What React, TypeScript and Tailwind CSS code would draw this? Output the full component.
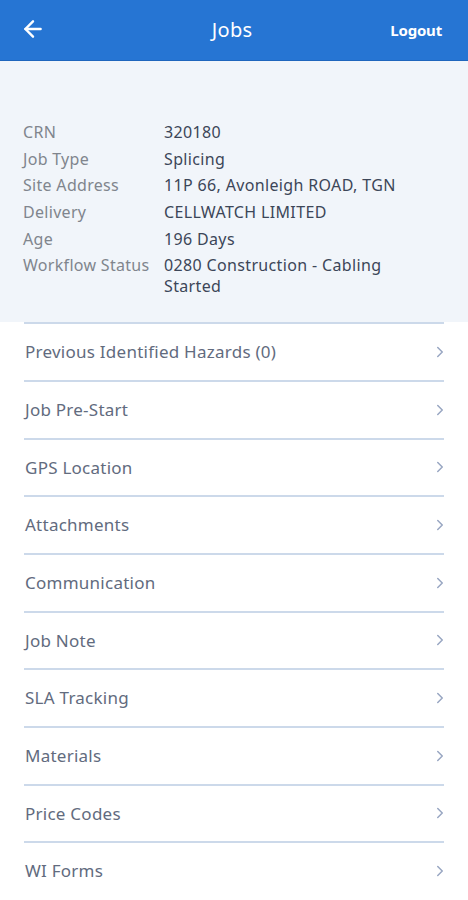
import React from 'react';
import { ArrowLeft, ChevronRight } from 'lucide-react';

const details: [string, string][] = [
  ['CRN', '320180'],
  ['Job Type', 'Splicing'],
  ['Site Address', '11P 66, Avonleigh ROAD, TGN'],
  ['Delivery', 'CELLWATCH LIMITED'],
  ['Age', '196 Days'],
  ['Workflow Status', '0280 Construction - Cabling Started'],
];

const menu = [
  'Previous Identified Hazards (0)',
  'Job Pre-Start',
  'GPS Location',
  'Attachments',
  'Communication',
  'Job Note',
  'SLA Tracking',
  'Materials',
  'Price Codes',
  'WI Forms',
];

export default function App() {
  return (
    <div className="w-[468px] h-[900px] bg-white overflow-hidden font-['Noto_Sans',sans-serif]">
      {/* top bar */}
      <div className="h-[61px] bg-[#2675d3] flex items-center justify-between pl-[20px] pr-[20px] border-b border-[#1f66bd]">
        <ArrowLeft className="w-[26px] h-[26px] text-white -mt-[3px]" strokeWidth={2.25} />
        <span className="text-white text-[20px] tracking-[0.3px] ml-[28px]">Jobs</span>
        <span className="text-white text-[15px] font-bold tracking-[-0.2px] mr-[6px]">Logout</span>
      </div>

      {/* job info */}
      <div className="bg-[#f1f5fa] pt-[61px] pb-[19px] px-[23px]">
        {details.map(([label, value]) => (
          <div key={label} className="flex text-[16px] leading-[21px] pb-[5.7px]">
            <div className="w-[141px] shrink-0 text-[#80858d] tracking-[0.3px]">{label}</div>
            <div className="text-[#3c4658] pr-[40px] tracking-[0.35px]">{value}</div>
          </div>
        ))}
      </div>

      {/* menu list */}
      <div className="px-[24px]">
        {menu.map((item) => (
          <div
            key={item}
            className="h-[57.7px] flex items-center justify-between border-t-2 border-[#ccd9ea]"
          >
            <span className="text-[17px] text-[#626b7e] pl-[1px] tracking-[0.25px]">{item}</span>
            <ChevronRight className="w-[18px] h-[18px] text-[#98a6c2] -mr-[5px]" strokeWidth={2} />
          </div>
        ))}
      </div>
    </div>
  );
}
